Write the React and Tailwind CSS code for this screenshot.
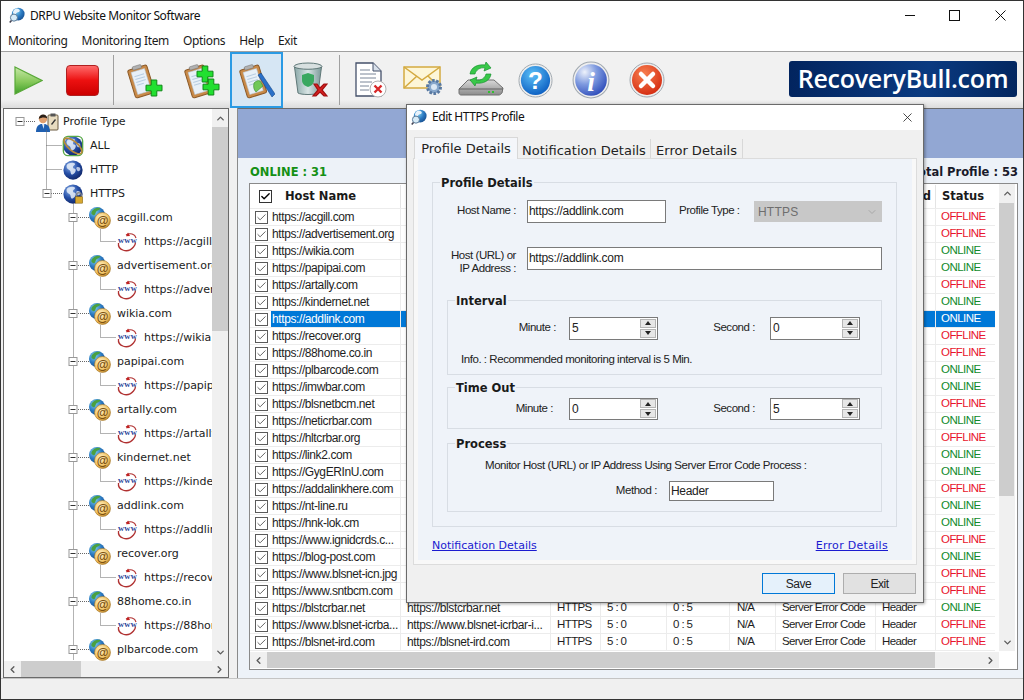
import { ChevronDown, ChevronLeft, ChevronRight, ChevronUp, Check, X } from "lucide-react"

const hosts = [
  ["https://acgill.com", 0],
  ["https://advertisement.org", 0],
  ["https://wikia.com", 1],
  ["https://papipai.com", 1],
  ["https://artally.com", 0],
  ["https://kindernet.net", 1],
  ["https://addlink.com", 1],
  ["https://recover.org", 0],
  ["https://88home.co.in", 0],
  ["https://plbarcode.com", 1],
  ["https://imwbar.com", 1],
  ["https://blsnetbcm.net", 0],
  ["https://neticrbar.com", 1],
  ["https://hltcrbar.org", 0],
  ["https://link2.com", 1],
  ["https://GygERInU.com", 1],
  ["https://addalinkhere.com", 0],
  ["https://nt-line.ru", 1],
  ["https://hnk-lok.cm", 1],
  ["https://www.ignidcrds.c...", 0],
  ["https://blog-post.com", 1],
  ["https://www.blsnet-icn.jpg", 0],
  ["https://www.sntbcm.com", 0],
  ["https://blstcrbar.net", 1, "https://blstcrbar.net"],
  ["https://www.blsnet-icrba...", 0, "https://www.blsnet-icrbar-i..."],
  ["https://blsnet-ird.com", 0, "https://blsnet-ird.com"],
]

const domains = ["acgill.com", "advertisement.org", "wikia.com", "papipai.com", "artally.com", "kindernet.net", "addlink.com", "recover.org", "88home.co.in", "plbarcode.com"]

function Gradients() {
  return (
    <svg width="0" height="0" className="block h-0 w-0">
      <defs>
        <radialGradient id="globe" cx="35%" cy="30%" r="80%">
          <stop offset="0%" stopColor="#8fb4ea" />
          <stop offset="50%" stopColor="#2650a8" />
          <stop offset="100%" stopColor="#0c1f5e" />
        </radialGradient>
        <radialGradient id="earth" cx="35%" cy="30%" r="80%">
          <stop offset="0%" stopColor="#7fd0f0" />
          <stop offset="55%" stopColor="#2a78c0" />
          <stop offset="100%" stopColor="#154a8a" />
        </radialGradient>
        <radialGradient id="gold" cx="40%" cy="35%" r="70%">
          <stop offset="0%" stopColor="#fff3c8" />
          <stop offset="70%" stopColor="#f0c060" />
          <stop offset="100%" stopColor="#b07820" />
        </radialGradient>
        <linearGradient id="play" x1="0" y1="0" x2="0" y2="1">
          <stop offset="0%" stopColor="#c8e8a8" />
          <stop offset="55%" stopColor="#86c85a" />
          <stop offset="100%" stopColor="#3fa02a" />
        </linearGradient>
        <radialGradient id="blueBall" cx="40%" cy="30%" r="75%">
          <stop offset="0%" stopColor="#5cc0f8" />
          <stop offset="100%" stopColor="#0a5cc0" />
        </radialGradient>
        <radialGradient id="infoBall" cx="30%" cy="25%" r="85%">
          <stop offset="0%" stopColor="#eef2fb" />
          <stop offset="45%" stopColor="#7f9be0" />
          <stop offset="100%" stopColor="#2a48b8" />
        </radialGradient>
        <radialGradient id="redBall" cx="40%" cy="30%" r="75%">
          <stop offset="0%" stopColor="#f88050" />
          <stop offset="100%" stopColor="#d42a10" />
        </radialGradient>
        <linearGradient id="binBody" x1="0" y1="0" x2="1" y2="0">
          <stop offset="0%" stopColor="#8aa8a8" />
          <stop offset="50%" stopColor="#d8e4e4" />
          <stop offset="100%" stopColor="#7a9898" />
        </linearGradient>
        <linearGradient id="driveTop" x1="0" y1="0" x2="0" y2="1">
          <stop offset="0%" stopColor="#d8d8d8" />
          <stop offset="100%" stopColor="#8c8c8c" />
        </linearGradient>
      </defs>
    </svg>
  )
}

function Globe() {
  return (
    <>
      <circle cx="12" cy="12" r="10.5" fill="url(#globe)" />
      <path d="M7 5c3-1.500 6-1 7 0 1 2-2 2-2 4s3 1 3 3-2 5-4 5-1-4-3-5-3-2-3-4 1-2 2-3z" fill="#e8eef8" opacity=".85" />
      <path d="M16 9c2-1 4 0 4 2s-2 3-3 2-2-3-1-4z" fill="#e8eef8" opacity=".75" />
    </>
  )
}

function TreeIcon({ kind }) {
  if (kind === "profile") {
    return (
      <svg width="24" height="21" viewBox="0 0 24 21" className="shrink-0">
        <rect x="13" y="3" width="10" height="15" rx="1" fill="#e8dcc0" stroke="#6a5a40" />
        <rect x="15.500" y="1.500" width="5" height="3" fill="#555" />
        <path d="M16 12l4-5 1 1-4 5z" fill="#333" />
        <path d="M1 20c0-6 3-8 6-8h2c3 0 6 2 6 8z" fill="#1f5fb0" />
        <path d="M7 12h2.400l-.7 5z" fill="#dfe8f4" />
        <circle cx="8" cy="7" r="4.200" fill="#e0a070" />
        <path d="M3.800 7c0-6 8.400-6 8.400-.5-2-1.500-5.500-1.500-8.400.5z" fill="#2a2018" />
      </svg>
    )
  }
  if (kind === "all" || kind === "http" || kind === "https") {
    return (
      <svg width="22" height="22" viewBox="0 0 24 24" className="shrink-0">
        <Globe />
        {kind === "all" && <rect x="1.500" y="1.500" width="21" height="21" rx="5" fill="none" stroke="#58a848" strokeWidth="1.500" />}
        {kind === "all" && <ellipse cx="12" cy="12" rx="12" ry="5" transform="rotate(40 12 12)" fill="none" stroke="#b88a3a" strokeWidth="1.800" />}
        {kind === "https" && (
          <>
            <path d="M16 15v-2a2.500 2.500 0 015 0v2" fill="none" stroke="#888" strokeWidth="1.300" />
            <rect x="14.500" y="15" width="8" height="7" fill="#d8a830" stroke="#806010" strokeWidth=".6" />
          </>
        )}
      </svg>
    )
  }
  if (kind === "domain") {
    return (
      <svg width="22" height="22" viewBox="0 0 22 22" className="shrink-0">
        <circle cx="8" cy="8" r="8" fill="url(#earth)" />
        <path d="M3 4c2-3 6-4 8-3 1 2-3 2-4 4s-1 4-3 3-2-2-1-4z" fill="#4aa040" />
        <circle cx="13.500" cy="13.500" r="8" fill="url(#gold)" stroke="#a87828" strokeWidth=".6" />
        <text x="13.500" y="17.500" textAnchor="middle" fontSize="12" fontFamily="Liberation Sans, sans-serif" fill="#7a5010" fontWeight="700">@</text>
      </svg>
    )
  }
  return (
    <svg width="21" height="21" viewBox="0 0 21 21" className="shrink-0">
      <path d="M1.500 11c-1 7 9 11 15 4 1-1.200 2-3 2-4.500" fill="none" stroke="#b03030" strokeWidth="1.300" />
      <path d="M9 3c4-2.500 9-1 10 3" fill="none" stroke="#b03030" strokeWidth="1.100" />
      <path d="M11 .5l2 3.500-4 .3z" fill="#c02020" />
      <text x="10.500" y="11" textAnchor="middle" fontSize="8.500" fontWeight="700" fontFamily="Liberation Serif, serif" fill="#1f3f98" letterSpacing=".2">www</text>
    </svg>
  )
}

function Plus({ cx, cy }) {
  const a = 8
  const b = 2.800
  return (
    <path
      d={`M${cx - b} ${cy - a}h${b * 2}v${a - b}h${a - b}v${b * 2}h${b - a}v${a - b}h${-b * 2}v${b - a}h${b - a}v${-b * 2}h${a - b}z`}
      fill="#22e030"
      stroke="#108818"
      strokeWidth="1"
    />
  )
}

function ClipBoard({ pen, plus = 1 }) {
  return (
    <svg width="37" height="37" viewBox="0 0 37 37">
      <g transform="rotate(-17 15 19)">
        <rect x="5" y="5" width="20" height="29" rx="2" fill="#c98a48" stroke="#8c5a28" />
        <rect x="8" y="8" width="14" height="23" fill="#e8f0f8" stroke="#b8c8d8" strokeWidth=".5" />
        <path d="M10 13h10M10 16h10M10 19h10M10 22h7" stroke="#b8cde2" />
        <rect x="10.500" y="3" width="9" height="3.500" rx="1" fill="#b0b0b0" stroke="#707070" strokeWidth=".5" />
      </g>
      {plus === 1 && !pen && <Plus cx={28} cy={26} />}
      {plus === 2 && <Plus cx={22} cy={12} />}
      {plus === 2 && <Plus cx={28} cy={25} />}
      {pen && (
        <>
          <path d="M20 13l3-2 14 21-3 3z" fill="#2a70c8" stroke="#184888" strokeWidth=".6" />
          <path d="M16 21c2-2 4-3 6-2l3 5-7 6c-2-2-3-5-2-9z" fill="#70c858" stroke="#3a8830" strokeWidth=".6" />
        </>
      )}
    </svg>
  )
}

function BinIcon() {
  return (
    <svg width="35" height="36" viewBox="0 0 35 36">
      <ellipse cx="15" cy="4.500" rx="14" ry="3.500" fill="#d8e0e0" stroke="#607878" />
      <path d="M1.500 5l3.500 26c3 2 17 2 20 0l3.500-26c-4 3-23 3-27 0z" fill="url(#binBody)" stroke="#607878" />
      <path d="M15 11l6 2v5c0 4-3 6-6 7-3-1-6-3-6-7v-5z" fill="#3aa860" />
      <path d="M21 22l3 0 3 4 4-4h3l-5 6 5 6h-3l-4-4-4 4h-3l5-6z" fill="#d82020" stroke="#a01010" strokeWidth="1.200" />
    </svg>
  )
}

function DocIcon() {
  return (
    <svg width="32" height="36" viewBox="0 0 32 36">
      <path d="M1 1h17l8 8v25h-25z" fill="#fff" stroke="#44506a" strokeWidth="1.300" />
      <path d="M18 1v8h8" fill="#d8e0ea" stroke="#44506a" />
      <path d="M5 8h10M5 12h16M5 16h16M5 20h12M5 24h9M5 28h9" stroke="#7a8698" />
      <circle cx="23" cy="27" r="8" fill="#fff" stroke="#b0b0b0" />
      <path d="M19.500 23.500l7 7M26.500 23.500l-7 7" stroke="#d82828" strokeWidth="2.400" />
    </svg>
  )
}

function MailIcon() {
  return (
    <svg width="40" height="32" viewBox="0 0 40 32">
      <rect x="1" y="3" width="36" height="21" fill="#fdf6d8" stroke="#d4aa40" strokeWidth="1.500" />
      <path d="M1 3l18 13L37 3M1 24l13-12M37 24L25 12" fill="none" stroke="#d4aa40" strokeWidth="1.500" />
      <circle cx="31" cy="23" r="6.500" fill="#88a8cc" stroke="#5878a0" strokeWidth="3" strokeDasharray="2.500 1.500" />
      <circle cx="31" cy="23" r="3" fill="#dce8f4" />
    </svg>
  )
}

function DiskIcon() {
  return (
    <svg width="46" height="36" viewBox="0 0 46 36">
      <path d="M10 18L1 27v4c0 1 1 2 2 2h38c1 0 2-1 3-2l1-5-9-8z" fill="url(#driveTop)" stroke="#707070" />
      <path d="M1 27h44" stroke="#606060" />
      <rect x="30" y="29" width="2" height="2" fill="#30c030" />
      <rect x="34" y="29" width="2" height="2" fill="#30c030" />
      <path d="M12 12C13 5 20 2 27 3l1-3 5 6-7 3 1-3c-5-1-9 2-10 6z" fill="#38c848" stroke="#189030" strokeWidth=".7" />
      <path d="M33 12c-1 7-8 10-15 9l-1 3-5-6 7-3-1 3c5 1 9-2 10-6z" fill="#38c848" stroke="#189030" strokeWidth=".7" />
    </svg>
  )
}

function RoundIcon({ fill, size, children }) {
  return (
    <svg width={size} height={size} viewBox="0 0 36 36">
      <circle cx="18" cy="18" r="17" fill="#eee" stroke="#a0a8b0" />
      <circle cx="18" cy="18" r="15" fill={fill} />
      {children}
    </svg>
  )
}

function ToolBtn({ className = "", children }) {
  return <div className={`flex shrink-0 items-center justify-center ${className}`}>{children}</div>
}

function Scroll({ dir, className = "", thumb }) {
  const vertical = dir === "v"
  return (
    <div className={`flex shrink-0 items-center bg-[#f0f0f0] text-[#5c5c5c] ${vertical ? "w-[16px] flex-col" : "h-[16px]"} ${className}`}>
      <div className={`flex shrink-0 items-center justify-center ${vertical ? "h-[18px] w-full" : "h-full w-[17px]"}`}>
        {vertical ? <ChevronUp size={11} strokeWidth={3} /> : <ChevronLeft size={11} strokeWidth={3} />}
      </div>
      <div className={`flex-1 ${vertical ? "w-full" : "h-full"}`}>{thumb}</div>
      <div className={`flex shrink-0 items-center justify-center ${vertical ? "h-[18px] w-full" : "h-full w-[17px]"}`}>
        {vertical ? <ChevronDown size={11} strokeWidth={3} /> : <ChevronRight size={11} strokeWidth={3} />}
      </div>
    </div>
  )
}

function TreeLines() {
  const ox = 4
  const oy = 109
  const segs = [
    [24, 121, 35, 121],
    [46.500, 130, 46.500, 193],
    [46.500, 145, 62, 145],
    [46.500, 169, 62, 169],
    [51, 193, 62, 193],
    [73.500, 203, 73.500, 660],
  ]
  const boxes = [[20, 121], [47, 193]]
  domains.forEach((_, i) => {
    const y = 217 + i * 48
    segs.push([78, y, 89, y])
    if (i < 9) {
      segs.push([100.500, y + 12, 100.500, y + 24])
      segs.push([100.500, y + 24, 116, y + 24])
    }
    boxes.push([73, y])
  })
  return (
    <svg width="208" height="551" className="absolute left-0 top-0">
      {segs.map((s, i) => (
        <line key={i} x1={s[0] - ox} y1={s[1] - oy + 0.5} x2={s[2] - ox} y2={s[3] - oy + 0.5} stroke="#666" strokeDasharray="1 1" />
      ))}
      {boxes.map((b, i) => (
        <g key={i} transform={`translate(${b[0] - ox - 4.5} ${b[1] - oy - 4})`}>
          <rect x=".5" y=".5" width="8" height="8" fill="#fff" stroke="#989898" />
          <line x1="2" y1="4.500" x2="7" y2="4.500" stroke="#333" />
        </g>
      ))}
    </svg>
  )
}

const levelPad = ["pl-[31px] gap-[4px]", "pl-[58px] gap-[6px]", "pl-[85px] gap-[6px]", "pl-[113px] gap-[6px]"]

function TreeRow({ level, icon, label }) {
  return (
    <div className={`flex h-[24px] items-center whitespace-nowrap ${levelPad[level]}`}>
      <TreeIcon kind={icon} />
      <span>{label}</span>
    </div>
  )
}

function Tree() {
  return (
    <div className="flex h-full w-[226px] shrink-0 flex-col border border-[#6a6a6a] bg-[#f0f0f0]">
      <div className="flex min-h-0 flex-1">
        <div className="relative h-full w-[208px] overflow-hidden bg-white pt-px font-['DejaVu_Sans',sans-serif] text-[11px] tracking-[-0.03px] text-[#1c1c1c]">
          <TreeLines />
          <TreeRow level={0} icon="profile" label="Profile Type" />
          <TreeRow level={1} icon="all" label="ALL" />
          <TreeRow level={1} icon="http" label="HTTP" />
          <TreeRow level={1} icon="https" label="HTTPS" />
          {domains.map((d) => (
            <div key={d}>
              <TreeRow level={2} icon="domain" label={d} />
              <TreeRow level={3} icon="www" label={`https://${d}`} />
            </div>
          ))}
        </div>
        <Scroll dir="v" className="h-full" thumb={<div className="h-[204px] w-full bg-[#cdcdcd]" />} />
      </div>
      <Scroll dir="h" className="w-full" thumb={<div className="h-full w-[60px] bg-[#cdcdcd]" />} />
    </div>
  )
}

const cols = ["w-[130px]", "w-[150px] pl-[6px]", "w-[50px] pl-[6px]", "w-[66px] pl-[6px]", "w-[63px] pl-[6px]", "w-[46px] pl-[7px]", "w-[100px] pl-[6px]", "w-[60px] pl-[6px]"]

function Checkbox({ dark }) {
  return (
    <div className={`flex h-[13px] w-[13px] shrink-0 items-center justify-center border bg-white ${dark ? "border-[#333]" : "border-[#5a5a5a]"}`}>
      <Check size={11} strokeWidth={dark ? 3 : 1.800} className={dark ? "text-black" : "text-[#444]"} />
    </div>
  )
}

function HostRow({ row }) {
  const selected = row[0] === "https://addlink.com"
  // only the rows below the dialog show their middle columns
  const values = row[2] ? [row[0], row[2], "HTTPS", "5 : 0", "0 : 5", "N/A", "Server Error Code", "Header"] : [row[0], "", "", "", "", "", "", ""]
  return (
    <div className="flex h-[17px] items-center border-b border-[#ececec]">
      <div className="flex w-[21px] shrink-0 justify-end pr-[3px]">
        <Checkbox />
      </div>
      {values.map((v, i) => (
        <div
          key={i}
          className={`flex h-full shrink-0 items-center overflow-hidden whitespace-nowrap border-r border-[#ececec] ${cols[i]} ${i === 0 ? "pl-[1px]" : ""} ${i > 1 ? "text-[11.5px] tracking-[-0.6px]" : ""} ${selected ? "bg-[#0078d7] text-white" : ""}`}
        >
          {v}
        </div>
      ))}
      <div className={`flex h-full w-[59px] shrink-0 items-center pl-[5px] text-[11.5px] tracking-[-0.55px] ${selected ? "bg-[#0078d7] text-white" : row[1] ? "text-[#0f8a2a]" : "text-[#e8142c]"}`}>
        {row[1] ? "ONLINE" : "OFFLINE"}
      </div>
    </div>
  )
}

function HostTable() {
  return (
    <div className="ml-[11px] mr-[5px] flex h-[487px] flex-col border border-[#8a8a8a] bg-white font-['Liberation_Sans',sans-serif] text-[12px] tracking-[-0.4px] text-[#1e1e1e]">
      <div className="flex min-h-0 flex-1">
        <div className="w-[745px] shrink-0">
          <div className="flex h-[25px] items-center border-b border-[#ececec] pt-px font-['DejaVu_Sans',sans-serif] text-[11.5px] font-bold tracking-normal text-[#1a1a1a]">
            <div className="flex w-[35px] shrink-0 justify-end pr-[13px]">
              <Checkbox dark />
            </div>
            <div className="flex h-full w-[116px] shrink-0 items-center border-r border-[#e4e4e4]">Host Name</div>
            {cols.slice(1, 7).map((c) => (
              <div key={c} className={`h-full shrink-0 border-r border-[#e4e4e4] ${c}`} />
            ))}
            <div className={`flex h-full shrink-0 items-center overflow-hidden border-r border-[#e4e4e4] ${cols[7]}`}>Method</div>
            <div className="w-[59px] shrink-0 pl-[6px]">Status</div>
          </div>
          {hosts.map((r) => (
            <HostRow key={r[0]} row={r} />
          ))}
        </div>
        <div className="h-full w-[21px] pl-[4px]">
          <Scroll dir="v" className="h-full" thumb={<div className="mt-px h-[293px] w-[15px] bg-[#cdcdcd]" />} />
        </div>
      </div>
      <div className="flex h-[18px] shrink-0 items-center pr-[18px]">
        <Scroll dir="h" className="w-full" thumb={<div className="h-full w-[668px] bg-[#cdcdcd]" />} />
      </div>
    </div>
  )
}

function Field({ className = "", children }) {
  return <div className={`flex shrink-0 items-center border border-[#7a7a7a] bg-white pb-px pl-[1px] text-[12px] tracking-[-0.3px] ${className}`}>{children}</div>
}

function Spinner({ value, className = "" }) {
  return (
    <Field className={`justify-between pl-[2px] pr-[1px] ${className}`}>
      <span>{value}</span>
      <div className="flex w-[16px] flex-col gap-px">
        <div className="flex h-[9px] items-center justify-center border border-[#b4b4b4] bg-[#e6e6e6]">
          <div className="h-0 w-0 border-x-[3px] border-b-[4px] border-x-transparent border-b-[#222]" />
        </div>
        <div className="flex h-[9px] items-center justify-center border border-[#b4b4b4] bg-[#e6e6e6]">
          <div className="h-0 w-0 border-x-[3px] border-t-[4px] border-x-transparent border-t-[#222]" />
        </div>
      </div>
    </Field>
  )
}

function Group({ title, className = "", children }) {
  return (
    <fieldset className={`border border-[#d8dde4] ${className}`}>
      <legend className="ml-[7px] h-[14px] px-px font-['DejaVu_Sans',sans-serif] text-[11.5px] font-bold leading-[16px] tracking-normal text-[#1a1a1a]">{title}</legend>
      {children}
    </fieldset>
  )
}

function ProfileDialog() {
  return (
    <div className="absolute left-[405px] top-[103px] flex h-[499px] w-[518px] flex-col border border-[#6a6a6a] bg-[#f0f0f0] font-['Liberation_Sans',sans-serif] text-[11.5px] tracking-[-0.45px] text-[#222] shadow-[1px_1px_3px_rgba(0,0,0,0.35)]">
      <div className="flex h-[25px] shrink-0 items-center bg-white pb-px pl-[4px] pr-[8px]">
        <AppIcon />
        <span className="ml-[4px] font-['Noto_Sans',sans-serif] text-[12px] tracking-[-0.45px] text-[#111]">Edit HTTPS Profile</span>
        <X size={15} strokeWidth={1.3} className="ml-auto text-[#222]" />
      </div>
      <div className="flex h-[28px] shrink-0 items-start pl-[7px] pt-[7px] font-['DejaVu_Sans',sans-serif] text-[13px] tracking-normal text-[#222]">
        <div className="relative flex h-[22px] w-[104px] items-center justify-center border border-b-0 border-[#d8d8d8] bg-[#f4f6fa]">Profile Details</div>
        <div className="mt-[2px] flex h-[20px] w-[133px] items-center justify-center border-r border-[#d8d8d8] pt-[4px]">Notification Details</div>
        <div className="mt-[2px] flex h-[20px] w-[92px] items-center justify-center border-r border-[#d8d8d8] pt-[4px]">Error Details</div>
      </div>
      <div className="mx-[6px] h-[407px] border border-[#dcdcdc] bg-[#f8f8f8] px-[4px] pb-[4px]">
        <div className="h-full bg-[#eff3f9] pl-[14px] pt-[16px]">
          <Group title="Profile Details" className="h-[352px] w-[465px]">
            <div className="mt-[11px] flex items-center">
              <div className="w-[83px] pb-[2px] text-right">Host Name :</div>
              <Field className="ml-[11px] h-[23px] w-[139px]">https://addlink.com</Field>
              <div className="ml-[13px] w-[62px] whitespace-nowrap pb-[2px]">Profile Type :</div>
              <div className="ml-[13px] flex h-[21px] w-[128px] items-center justify-between bg-[#c8c8c8] px-[4px] text-[12px] tracking-[0.2px] text-[#6e6e6e]">
                HTTPS
                <ChevronDown size={12} className="text-[#a8a8a8]" />
              </div>
            </div>
            <div className="mt-[24px] flex items-start">
              <div className="mt-[2px] w-[83px] text-right leading-[13px]">
                Host (URL) or
                <br />
                IP Address :
              </div>
              <Field className="ml-[11px] h-[23px] w-[355px]">https://addlink.com</Field>
            </div>
            <Group title="Interval" className="ml-[14px] mt-[18px] h-[82px] w-[435px]">
              <div className="mt-[10px] flex items-center">
                <div className="w-[108px] pb-[2px] text-right">Minute :</div>
                <Spinner value="5" className="ml-[13px] h-[23px] w-[89px]" />
                <div className="w-[97px] pb-[2px] text-right">Second :</div>
                <Spinner value="0" className="ml-[15px] h-[23px] w-[90px]" />
              </div>
              <div className="ml-[13px] mt-[11px]">Info. : Recommended monitoring interval is 5 Min.</div>
            </Group>
            <Group title="Time Out" className="ml-[14px] mt-[5px] h-[49px] w-[435px]">
              <div className="mt-[4px] flex items-center">
                <div className="w-[105px] text-right">Minute :</div>
                <Spinner value="0" className="ml-[16px] h-[22px] w-[89px]" />
                <div className="w-[97px] text-right">Second :</div>
                <Spinner value="5" className="ml-[15px] h-[22px] w-[90px]" />
              </div>
            </Group>
            <Group title="Process" className="ml-[14px] mt-[7px] h-[76px] w-[435px]">
              <div className="ml-[37px] mt-[8px] h-[14px] leading-[14px]">Monitor Host (URL) or IP Address Using Server Error Code Process :</div>
              <div className="mt-[9px] flex items-center">
                <div className="w-[209px] text-right">Method :</div>
                <Field className="ml-[12px] h-[20px] w-[105px]">Header</Field>
              </div>
            </Group>
          </Group>
          <div className="mt-[11px] flex w-[456px] justify-between font-['DejaVu_Sans',sans-serif] text-[11px] tracking-normal text-[#1a1ad0]">
            <span className="underline">Notification Details</span>
            <span className="tracking-[0.3px] underline">Error Details</span>
          </div>
        </div>
      </div>
      <div className="mr-[7px] mt-[8px] flex justify-end gap-[8px] text-[12px]">
        <div className="flex h-[21px] w-[73px] items-center justify-center border border-[#0078d7] bg-[#e5f1fb]">Save</div>
        <div className="flex h-[21px] w-[73px] items-center justify-center border border-[#adadad] bg-[#e1e1e1]">Exit</div>
      </div>
    </div>
  )
}

function AppIcon() {
  return (
    <svg width="17" height="17" viewBox="0 0 24 24" className="shrink-0">
      <circle cx="13" cy="10" r="9" fill="url(#earth)" />
      <path d="M10 2c4 0 6 2 5 4s-4 1-5 3-3 2-4 0 1-6 4-7z" fill="#e8f2fb" />
      <circle cx="7" cy="15" r="5" fill="#d8ecf8" stroke="#5a7a98" strokeWidth="1.400" />
      <path d="M3.500 19L1 22" stroke="#445" strokeWidth="2.200" />
    </svg>
  )
}

export default function App() {
  return (
    <div className="relative flex h-[700px] w-[1024px] flex-col overflow-hidden border border-[#333] bg-[#f0f0f0] font-['Noto_Sans',sans-serif]">
      <Gradients />
      <div className="flex h-[29px] shrink-0 items-center bg-white pl-[8px] pr-[17px] text-[12px] tracking-[-0.4px] text-[#111]">
        <AppIcon />
        <span className="ml-[4px]">DRPU Website Monitor Software</span>
        <div className="ml-auto flex items-center">
          <svg width="10" height="11" viewBox="0 0 10 11" className="mr-[34px]">
            <line x1="0" y1="5.500" x2="10" y2="5.500" stroke="#111" />
          </svg>
          <svg width="11" height="11" viewBox="0 0 11 11" className="mr-[35px]">
            <rect x=".5" y=".5" width="10" height="10" fill="none" stroke="#111" />
          </svg>
          <svg width="11" height="11" viewBox="0 0 11 11">
            <path d="M.5.5l10 10M10.500.5l-10 10" stroke="#111" />
          </svg>
        </div>
      </div>
      <div className="flex h-[21px] shrink-0 items-center gap-[14px] bg-white pl-[7px] text-[12px] tracking-[-0.35px] text-[#1a1a1a]">
        <span>Monitoring</span>
        <span>Monitoring Item</span>
        <span>Options</span>
        <span>Help</span>
        <span>Exit</span>
      </div>
      <div className="flex h-[57px] shrink-0 items-center border-t border-[#a0a0a0] bg-[linear-gradient(#f1f1f1_85%,#dcdcdc)] pl-[13px]">
        <ToolBtn className="w-[29px]">
          <svg width="29" height="29" viewBox="0 0 29 29">
            <path d="M1 1l27 13.500L1 28z" fill="url(#play)" stroke="#58a838" strokeWidth="1.200" />
          </svg>
        </ToolBtn>
        <ToolBtn className="ml-[23px] w-[33px]">
          <div className="h-[31px] w-[33px] rounded-[4px] border border-[#b02020] bg-[linear-gradient(#ff6a6a,#ec1010_50%,#cc0000)]" />
        </ToolBtn>
        <div className="ml-[14px] h-[50px] w-px bg-[#a0a0a0]" />
        <ToolBtn className="ml-[12px] w-[37px]">
          <ClipBoard />
        </ToolBtn>
        <ToolBtn className="ml-[20px] w-[37px]">
          <ClipBoard plus={2} />
        </ToolBtn>
        <ToolBtn className="ml-[10px] h-[56px] w-[53px] border-2 border-[#2a9ae4] bg-[#d6e6f4]">
          <ClipBoard pen />
        </ToolBtn>
        <ToolBtn className="ml-[10px] w-[35px]">
          <BinIcon />
        </ToolBtn>
        <div className="ml-[11px] h-[50px] w-px bg-[#a0a0a0]" />
        <ToolBtn className="ml-[15px] w-[32px]">
          <DocIcon />
        </ToolBtn>
        <ToolBtn className="ml-[16px] w-[40px]">
          <MailIcon />
        </ToolBtn>
        <ToolBtn className="ml-[15px] w-[46px]">
          <DiskIcon />
        </ToolBtn>
        <ToolBtn className="ml-[14px] w-[35px]">
          <RoundIcon fill="url(#blueBall)" size={35}>
            <text x="18" y="27" textAnchor="middle" fontSize="25" fontWeight="700" fontFamily="Liberation Sans, sans-serif" fill="#fff">?</text>
          </RoundIcon>
        </ToolBtn>
        <ToolBtn className="ml-[19px] w-[38px]">
          <RoundIcon fill="url(#infoBall)" size={38}>
            <text x="18" y="28" textAnchor="middle" fontSize="26" fontWeight="700" fontStyle="italic" fontFamily="Liberation Serif, serif" fill="#fff">i</text>
          </RoundIcon>
        </ToolBtn>
        <ToolBtn className="ml-[19px] w-[36px]">
          <RoundIcon fill="url(#redBall)" size={36}>
            <path d="M12 12l12 12M24 12L12 24" stroke="#fff" strokeWidth="4.500" strokeLinecap="round" />
          </RoundIcon>
        </ToolBtn>
        <div className="mb-[2px] ml-auto mr-[6px] flex h-[36px] w-[228px] items-center justify-center rounded-[3px] bg-[linear-gradient(100deg,#02245e,#0a3a80_60%,#03265f)] font-['Open_Sans',sans-serif] text-[25px] font-semibold tracking-[-0.25px] text-white">
          RecoveryBull.com
        </div>
      </div>
      <div className="flex min-h-0 flex-1 pl-[2px]">
        <Tree />
        <div className="ml-[8px] flex h-full min-w-0 flex-1 flex-col border-l border-[#8a8a8a] bg-[#edf2f8]">
          <div className="h-[50px] shrink-0 border-t border-[#6a6a6a] bg-[#92a7d3]" />
          <div className="flex h-[25px] shrink-0 items-center justify-between pl-[12px] pr-[5px] pt-[5px] font-['DejaVu_Sans',sans-serif] text-[11.5px] font-bold">
            <span className="text-[#149014]">ONLINE : 31</span>
            <span className="text-[#1a1a2a]">Total Profile : 53</span>
          </div>
          <HostTable />
        </div>
      </div>
      <div className="h-[21px] shrink-0 border-t border-[#c4c4c4] bg-[#f0f0f0]" />
      <ProfileDialog />
    </div>
  )
}
